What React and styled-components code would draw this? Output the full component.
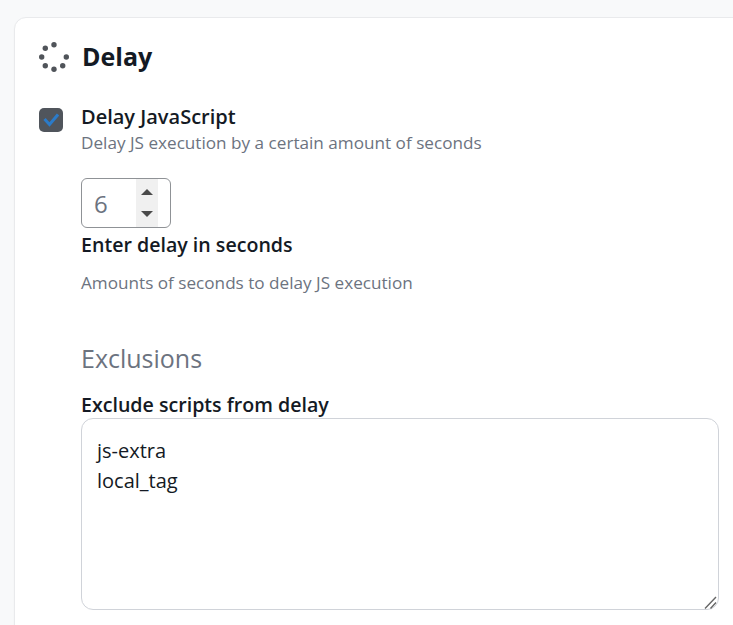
import React from "react";
import styled, { createGlobalStyle } from "styled-components";

const GlobalStyle = createGlobalStyle`
  html, body {
    margin: 0;
    height: 100%;
    overflow: hidden;
    background: #f8f9fa;
    font-family: "Open Sans", "Noto Sans", "Liberation Sans", sans-serif;
  }
`;

const Page = styled.div`
  padding: 17px 0 0 14px;
  width: 733px;
  height: 625px;
  box-sizing: border-box;
  overflow: hidden;
`;

const Card = styled.section`
  width: 760px;
  height: 700px;
  box-sizing: border-box;
  background: #fff;
  border: 1px solid #e9eaec;
  border-radius: 12px;
  padding: 24px;
  box-shadow: 0 1px 2px rgba(0, 0, 0, 0.03);
`;

const Header = styled.header`
  display: flex;
  align-items: center;
  gap: 13px;
  height: 30px;
`;

const Title = styled.h2`
  margin: -2px 0 0;
  font-size: 25px;
  line-height: 30px;
  font-weight: 700;
  color: #141a24;
`;

const Row = styled.div`
  display: flex;
  gap: 18px;
  margin-top: 35px;
`;

const Checkbox = styled.span`
  width: 24px;
  height: 24px;
  margin-top: 1px;
  border-radius: 5px;
  background: #50555c;
  display: flex;
  align-items: center;
  justify-content: center;
  flex-shrink: 0;
`;

const Column = styled.div`
  width: 638px;
  margin-top: -3px;
`;

const OptionLabel = styled.div`
  font-size: 20px;
  line-height: 26px;
  font-weight: 600;
  color: #141a24;
`;

const Hint = styled.div`
  font-size: 17.15px;
  line-height: 26px;
  color: #6c737f;
`;

const NumberBox = styled.div`
  margin-top: 22px;
  width: 90px;
  height: 50px;
  box-sizing: border-box;
  border: 1px solid #8f9296;
  border-radius: 6px;
  display: flex;
  align-items: center;
  padding-left: 12px;
`;

const NumberValue = styled.span`
  flex: 1;
  font-size: 24px;
  color: #6c737f;
`;

const Spinner = styled.div`
  width: 22px;
  height: 48px;
  margin-right: 12px;
  background: #f0f0f0;
  display: flex;
  flex-direction: column;
  align-items: center;
  justify-content: space-between;
  padding: 10px 0;
  box-sizing: border-box;
`;

const Arrow = styled.span`
  width: 0;
  height: 0;
  border-left: 6px solid transparent;
  border-right: 6px solid transparent;
  border-${(p) => (p.$up ? "bottom" : "top")}: 6px solid #4a4a4a;
`;

const FieldLabel = styled.div`
  font-size: 19.6px;
  line-height: 26px;
  font-weight: 600;
  color: #141a24;
  margin-top: 4px;
`;

const FieldHint = styled(Hint)`
  margin-top: 12px;
`;

const SectionTitle = styled.h3`
  margin: 45px 0 0;
  font-size: 25px;
  line-height: 34px;
  font-weight: 400;
  color: #6c737f;
`;

const ExcludeLabel = styled(FieldLabel)`
  margin-top: 17px;
`;

const TextAreaWrap = styled.div`
  position: relative;
  width: 638px;
  height: 192px;
`;

const TextArea = styled.textarea`
  display: block;
  width: 100%;
  height: 100%;
  box-sizing: border-box;
  margin: 0;
  padding: 17px 15px;
  border: 1px solid #d0d3d9;
  border-radius: 12px;
  outline: none;
  resize: none;
  font-family: inherit;
  font-size: 20px;
  line-height: 30px;
  color: #141a24;
  background: #fff;
`;

const Grip = styled.svg`
  position: absolute;
  right: 2px;
  bottom: 1px;
`;

const SpinnerIcon = () => {
  const dots = [
    [15, 2.7],
    [6.3, 6.2],
    [2.7, 15],
    [6.3, 23.7],
    [15, 27.3],
    [23.7, 23.7],
    [27.3, 15],
  ];
  return (
    <svg width="30" height="30" viewBox="0 0 30 30" aria-hidden="true">
      {dots.map(([cx, cy], i) => (
        <circle key={i} cx={cx} cy={cy} r="2.7" fill="#50545a" />
      ))}
    </svg>
  );
};

const CheckIcon = () => (
  <svg width="16" height="14" viewBox="0 0 16 14" aria-hidden="true">
    <path d="M1.5 6 L6.5 11.5 L15 1.5" fill="none" stroke="#2b7bc9" strokeWidth="3" />
  </svg>
);

const App = () => (
  <Page>
    <GlobalStyle />
    <Card>
      <Header>
        <SpinnerIcon />
        <Title>Delay</Title>
      </Header>
      <Row>
        <Checkbox>
          <CheckIcon />
        </Checkbox>
        <Column>
          <OptionLabel>Delay JavaScript</OptionLabel>
          <Hint>Delay JS execution by a certain amount of seconds</Hint>
          <NumberBox>
            <NumberValue>6</NumberValue>
            <Spinner>
              <Arrow $up />
              <Arrow />
            </Spinner>
          </NumberBox>
          <FieldLabel>Enter delay in seconds</FieldLabel>
          <FieldHint>Amounts of seconds to delay JS execution</FieldHint>
          <SectionTitle>Exclusions</SectionTitle>
          <ExcludeLabel>Exclude scripts from delay</ExcludeLabel>
          <TextAreaWrap>
            <TextArea defaultValue={"js-extra\nlocal_tag"} />
            <Grip width="13" height="13" viewBox="0 0 13 13" aria-hidden="true">
              <path d="M1 12.5 L12 1 M6.5 12.5 L12 6.5" fill="none" stroke="#666" strokeWidth="1.4" />
            </Grip>
          </TextAreaWrap>
        </Column>
      </Row>
    </Card>
  </Page>
);

export default App;
